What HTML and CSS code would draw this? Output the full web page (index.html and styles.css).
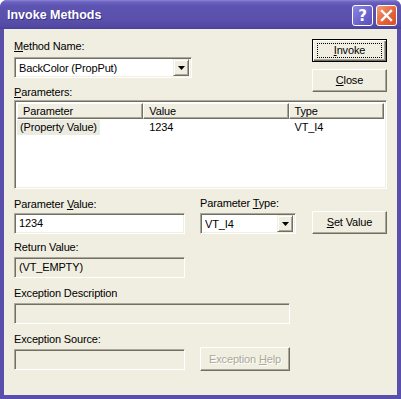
FILE: index.html
```html
<!DOCTYPE html>
<html>
<head>
<meta charset="utf-8">
<link rel="stylesheet" href="styles.css">
</head>
<body>
<div class="window">
  <div class="titlebar">
    <span class="title">Invoke Methods</span>
    <div class="tbtns">
      <div class="tbtn help">?</div>
      <div class="tbtn close">
        <svg width="13" height="13" viewBox="0 0 13 13"><path d="M2 2 L11 11 M11 2 L2 11" stroke="#fff" stroke-width="2.4" stroke-linecap="square"/></svg>
      </div>
    </div>
  </div>
  <div class="client">
    <div class="top">
      <div class="top-left">
        <div class="label first"><u>M</u>ethod Name:</div>
        <div class="combo combo-method">
          <span class="combo-text">BackColor (PropPut)</span>
          <span class="drop"><svg width="7" height="4" viewBox="0 0 7 4"><path d="M0 0 H7 L3.5 4 Z" fill="#000"/></svg></span>
        </div>
        <div class="label params"><u>P</u>arameters:</div>
      </div>
      <div class="btn-col">
        <div class="btn default"><span class="focus"><span><u>I</u>nvoke</span></span></div>
        <div class="btn"><span><u>C</u>lose</span></div>
      </div>
    </div>
    <div class="listview">
      <div class="lv-head">
        <div class="hcell c1">Parameter</div>
        <div class="hcell c2">Value</div>
        <div class="hcell c3">Type</div>
      </div>
      <div class="lv-row">
        <div class="cell c1"><span class="sel">(Property Value)</span></div>
        <div class="cell c2">1234</div>
        <div class="cell c3">VT_I4</div>
      </div>
    </div>
    <div class="row row-a">
      <div class="field w171">
        <div class="label">Parameter <u>V</u>alue:</div>
        <div class="edit">1234</div>
      </div>
      <div class="field w96">
        <div class="label">Parameter <u>T</u>ype:</div>
        <div class="combo combo-type">
          <span class="combo-text">VT_I4</span>
          <span class="drop"><svg width="7" height="4" viewBox="0 0 7 4"><path d="M0 0 H7 L3.5 4 Z" fill="#000"/></svg></span>
        </div>
      </div>
      <div class="btn setval"><span><u>S</u>et Value</span></div>
    </div>
    <div class="row row-b">
      <div class="field w171">
        <div class="label">Return Value:</div>
        <div class="edit disabled">(VT_EMPTY)</div>
      </div>
    </div>
    <div class="row row-c">
      <div class="field w276">
        <div class="label">Exception Description</div>
        <div class="edit disabled"></div>
      </div>
    </div>
    <div class="row row-d">
      <div class="field w171">
        <div class="label">Exception Source:</div>
        <div class="edit disabled"></div>
      </div>
      <div class="btn exhelp dis"><span>Exception <u>H</u>elp</span></div>
    </div>
  </div>
</div>
</body>
</html>
```
FILE: styles.css
```css
html, body {
  margin: 0;
  padding: 0;
  background: #fff;
}
.window {
  width: 401px;
  height: 399px;
  box-sizing: border-box;
  display: flex;
  flex-direction: column;
  font-family: "Liberation Sans", Arial, sans-serif;
  font-size: 11px;
  letter-spacing: -0.15px;
  color: #000;
  background: #5a50ab;
  border-radius: 7px 7px 0 0;
  overflow: hidden;
}
.titlebar {
  height: 29px;
  flex: none;
  display: flex;
  align-items: center;
  justify-content: space-between;
  padding: 0 4px 0 7px;
  background: linear-gradient(#8a84d6 0px, #6b62c0 2px, #5d53b0 6px, #5a50ac 20px, #5148a3 27px, #4a419b 29px);
  box-sizing: border-box;
}
.title {
  font-weight: bold;
  font-size: 12.5px;
  letter-spacing: 0;
  color: #fff;
  text-shadow: 1px 1px 0 #3a3186;
  margin-top: 1px;
}
.tbtns {
  display: flex;
  gap: 3px;
  margin-top: 2px;
}
.tbtn {
  width: 19px;
  height: 19px;
  border: 1px solid #fff;
  border-radius: 3px;
  display: flex;
  align-items: center;
  justify-content: center;
  color: #fff;
}
.tbtn.help {
  background: linear-gradient(135deg, #8c86e0, #6a62cc 60%, #5950b8);
  font-weight: bold;
  font-size: 15px;
  font-family: "DejaVu Sans", sans-serif;
}
.tbtn.close {
  background: linear-gradient(135deg, #f2a07a, #e5643a 55%, #d54f26);
}
.client {
  flex: 1;
  margin: 0 4px 4px 4px;
  background: #f0eee1;
  padding: 10px 10px 0 10px;
}
.label {
  height: 13px;
  line-height: 13px;
  white-space: nowrap;
}
.top {
  display: flex;
  justify-content: space-between;
  height: 60px;
}
.label.first {
  margin-top: 1px;
}
.label.params {
  margin-top: 8px;
}
.btn-col {
  display: flex;
  flex-direction: column;
  gap: 7px;
}
/* sunken edit */
.edit, .combo, .listview {
  box-sizing: border-box;
  border-top: 1px solid #aca899;
  border-left: 1px solid #aca899;
  border-right: 1px solid #fff;
  border-bottom: 1px solid #fff;
  box-shadow: inset 1px 1px 0 #716f64, inset -1px -1px 0 #f1efe2;
  background: #fff;
}
.edit {
  height: 21px;
  margin-top: 3px;
  padding: 0 4px;
  line-height: 19px;
}
.edit.disabled {
  background: #f0eee1;
}
.combo {
  height: 21px;
  margin-top: 4px;
  display: flex;
  align-items: center;
  justify-content: space-between;
  padding: 2px 2px 2px 4px;
}
.combo-method {
  width: 178px;
}
.combo-type {
  width: 96px;
  margin-top: 3px;
}
.drop {
  width: 16px;
  height: 17px;
  box-sizing: border-box;
  background: #f0eee1;
  border-top: 1px solid #f1efe2;
  border-left: 1px solid #f1efe2;
  border-right: 1px solid #716f64;
  border-bottom: 1px solid #716f64;
  box-shadow: inset 1px 1px 0 #fff, inset -1px -1px 0 #aca899;
  display: flex;
  align-items: center;
  justify-content: center;
  padding-top: 1px;
}
/* buttons */
.btn {
  width: 75px;
  height: 23px;
  box-sizing: border-box;
  background: #f0eee1;
  border-top: 1px solid #fff;
  border-left: 1px solid #fff;
  border-right: 1px solid #716f64;
  border-bottom: 1px solid #716f64;
  box-shadow: inset -1px -1px 0 #aca899;
  display: flex;
  align-items: center;
  justify-content: center;
  padding-bottom: 1px;
  white-space: nowrap;
}
.btn.default {
  border: 1px solid #000;
  box-shadow: inset 1px 1px 0 #fff, inset -1px -1px 0 #716f64, inset -2px -2px 0 #aca899;
}
.focus {
  border: 1px dotted #000;
  width: 65px;
  height: 15px;
  box-sizing: border-box;
  display: flex;
  align-items: center;
  justify-content: center;
}
.btn.dis {
  color: #aca899;
  text-shadow: 1px 1px 0 #fff;
}
/* listview */
.listview {
  margin-top: 1px;
  height: 89px;
  padding: 2px;
}
.lv-head {
  display: flex;
  height: 16px;
}
.hcell {
  box-sizing: border-box;
  background: #f0eee1;
  border-top: 1px solid #fff;
  border-left: 1px solid #fff;
  border-right: 1px solid #716f64;
  border-bottom: 1px solid #716f64;
  box-shadow: inset -1px -1px 0 #aca899;
  padding-left: 5px;
  line-height: 14px;
}
.c1 { width: 127px; }
.c2 { width: 146px; }
.c3 { width: 96px; }
.lv-row {
  display: flex;
  height: 15px;
  margin-top: 1px;
  line-height: 15px;
}
.cell {
  box-sizing: border-box;
  padding-left: 6px;
}
.cell.c1 {
  padding-left: 0;
}
.sel {
  display: inline-block;
  background: #ecebe0;
  padding: 0 3px;
}
/* lower rows */
.row {
  display: flex;
  align-items: flex-end;
}
.field {
  display: flex;
  flex-direction: column;
}
.w171 { width: 171px; }
.w96 { width: 96px; margin-left: 15px; }
.w276 { width: 276px; }
.row-a { margin-top: 8px; }
.row-b { margin-top: 7px; }
.row-c { margin-top: 9px; }
.row-d { margin-top: 9px; }
.row-a .edit { margin-top: 2px; }
.setval {
  margin-left: auto;
}
.exhelp {
  width: 90px;
  margin-left: 15px;
  height: 24px;
  margin-bottom: -1px;
}
```
